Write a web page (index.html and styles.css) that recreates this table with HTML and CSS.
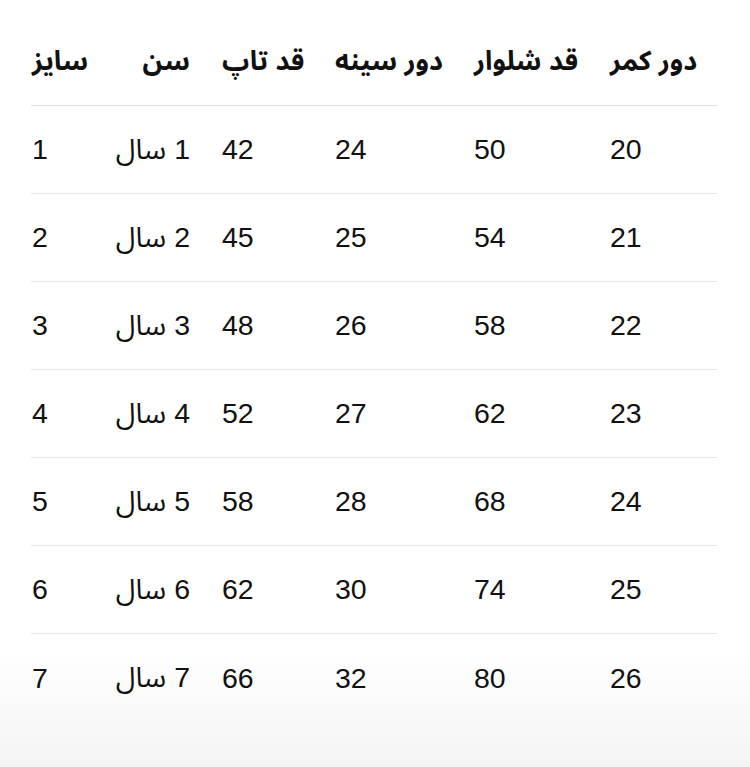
FILE: index.html
```html
<!DOCTYPE html>
<html lang="fa">
<head>
<meta charset="utf-8">
<link rel="stylesheet" href="styles.css">
</head>
<body>
<div class="page">
  <div class="table">
    <div class="row head">
      <div class="cell c1">سایز</div>
      <div class="cell c2" dir="rtl">سن</div>
      <div class="cell c3">قد تاپ</div>
      <div class="cell c4">دور سینه</div>
      <div class="cell c5">قد شلوار</div>
      <div class="cell c6">دور کمر</div>
    </div>
    <div class="row"><div class="cell c1">1</div><div class="cell c2" dir="rtl">1 سال</div><div class="cell c3">42</div><div class="cell c4">24</div><div class="cell c5">50</div><div class="cell c6">20</div></div>
    <div class="row"><div class="cell c1">2</div><div class="cell c2" dir="rtl">2 سال</div><div class="cell c3">45</div><div class="cell c4">25</div><div class="cell c5">54</div><div class="cell c6">21</div></div>
    <div class="row"><div class="cell c1">3</div><div class="cell c2" dir="rtl">3 سال</div><div class="cell c3">48</div><div class="cell c4">26</div><div class="cell c5">58</div><div class="cell c6">22</div></div>
    <div class="row"><div class="cell c1">4</div><div class="cell c2" dir="rtl">4 سال</div><div class="cell c3">52</div><div class="cell c4">27</div><div class="cell c5">62</div><div class="cell c6">23</div></div>
    <div class="row"><div class="cell c1">5</div><div class="cell c2" dir="rtl">5 سال</div><div class="cell c3">58</div><div class="cell c4">28</div><div class="cell c5">68</div><div class="cell c6">24</div></div>
    <div class="row"><div class="cell c1">6</div><div class="cell c2" dir="rtl">6 سال</div><div class="cell c3">62</div><div class="cell c4">30</div><div class="cell c5">74</div><div class="cell c6">25</div></div>
    <div class="row last"><div class="cell c1">7</div><div class="cell c2" dir="rtl">7 سال</div><div class="cell c3">66</div><div class="cell c4">32</div><div class="cell c5">80</div><div class="cell c6">26</div></div>
  </div>
</div>
</body>
</html>
```

FILE: styles.css
```css
html, body {
  margin: 0;
  padding: 0;
}
body {
  width: 750px;
  height: 767px;
  overflow: hidden;
  background: linear-gradient(to bottom, #ffffff 0, #ffffff 650px, #f4f4f4 767px);
  font-family: "Liberation Sans", "Noto Sans Arabic", "DejaVu Sans", sans-serif;
  color: #111111;
}
.page {
  padding: 18px 33px 0 31px;
}
.table {
  display: flex;
  flex-direction: column;
}
.row {
  box-sizing: border-box;
  display: grid;
  grid-template-columns: 87px 104px 113px 139px 136px 107px;
  height: 88px;
  align-items: center;
  border-bottom: 1px solid #e6e6e6;
  font-size: 28.5px;
}
.row.head {
  font-weight: bold;
  font-size: 27px;
  border-bottom-color: #dedede;
}
.row.last {
  border-bottom: none;
}
.cell {
  white-space: nowrap;
  text-align: left;
}
.c1 {
  padding-left: 1px;
}
.c2 {
  text-align: right;
  padding-right: 32px;
}
```
